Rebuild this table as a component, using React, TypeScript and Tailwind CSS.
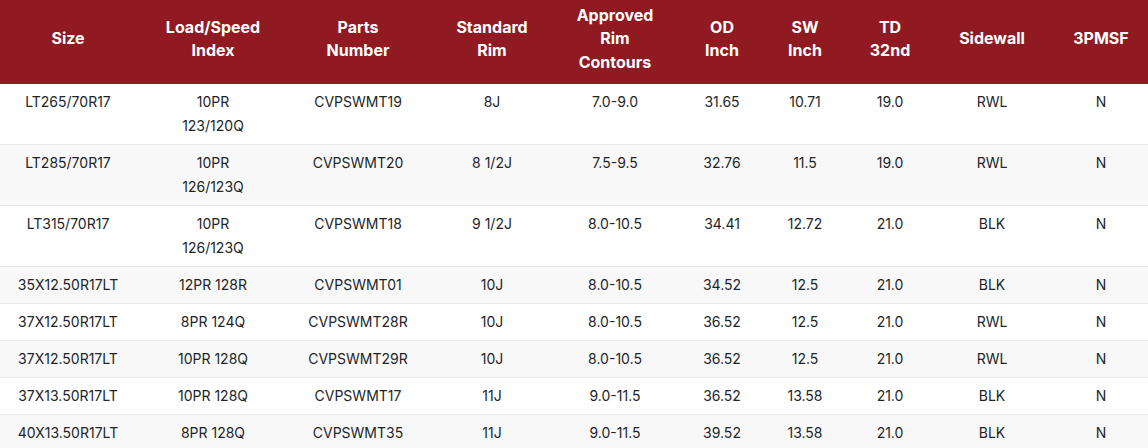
const HEAD = [
  ["Size"],
  ["Load/Speed", "Index"],
  ["Parts", "Number"],
  ["Standard", "Rim"],
  ["Approved", "Rim", "Contours"],
  ["OD", "Inch"],
  ["SW", "Inch"],
  ["TD", "32nd"],
  ["Sidewall"],
  ["3PMSF"],
];

const WIDTHS = ["w-[136px]", "w-[154px]", "w-[136px]", "w-[132px]", "w-[114px]", "w-[100px]", "w-[66px]", "w-[104px]", "w-[100px]", "w-[106px]"];

type Row = string[][];

const ROWS: Row[] = [
  [["LT265/70R17"], ["10PR", "123/120Q"], ["CVPSWMT19"], ["8J"], ["7.0-9.0"], ["31.65"], ["10.71"], ["19.0"], ["RWL"], ["N"]],
  [["LT285/70R17"], ["10PR", "126/123Q"], ["CVPSWMT20"], ["8 1/2J"], ["7.5-9.5"], ["32.76"], ["11.5"], ["19.0"], ["RWL"], ["N"]],
  [["LT315/70R17"], ["10PR", "126/123Q"], ["CVPSWMT18"], ["9 1/2J"], ["8.0-10.5"], ["34.41"], ["12.72"], ["21.0"], ["BLK"], ["N"]],
  [["35X12.50R17LT"], ["12PR 128R"], ["CVPSWMT01"], ["10J"], ["8.0-10.5"], ["34.52"], ["12.5"], ["21.0"], ["BLK"], ["N"]],
  [["37X12.50R17LT"], ["8PR 124Q"], ["CVPSWMT28R"], ["10J"], ["8.0-10.5"], ["36.52"], ["12.5"], ["21.0"], ["RWL"], ["N"]],
  [["37X12.50R17LT"], ["10PR 128Q"], ["CVPSWMT29R"], ["10J"], ["8.0-10.5"], ["36.52"], ["12.5"], ["21.0"], ["RWL"], ["N"]],
  [["37X13.50R17LT"], ["10PR 128Q"], ["CVPSWMT17"], ["11J"], ["9.0-11.5"], ["36.52"], ["13.58"], ["21.0"], ["BLK"], ["N"]],
  [["40X13.50R17LT"], ["8PR 128Q"], ["CVPSWMT35"], ["11J"], ["9.0-11.5"], ["39.52"], ["13.58"], ["21.0"], ["BLK"], ["N"]],
];

export default function App() {
  return (
    <div className="w-[1148px] h-[448px] overflow-hidden bg-white font-['Inter','Liberation_Sans',sans-serif]">
      <table className="w-full table-fixed border-collapse text-center">
        <colgroup>
          {WIDTHS.map((w, i) => (
            <col key={i} className={w} />
          ))}
        </colgroup>
        <thead>
          <tr className="h-[84px] bg-[#901a21]">
            {HEAD.map((lines, i) => (
              <th
                key={i}
                className={`${i === 9 ? 'pl-[14px] pr-[2px]' : 'px-1'} pb-[6px] text-[16px] leading-[23.5px] font-bold text-white align-middle`}
              >
                {lines.map((l, j) => (
                  <div key={j}>{l}</div>
                ))}
              </th>
            ))}
          </tr>
        </thead>
        <tbody>
          {ROWS.map((row, r) => (
            <tr key={r} className={`border-b border-[#e8e8e8] ${r % 2 === 1 ? 'bg-[#f8f8f8]' : 'bg-white'}`}>
              {row.map((cell, c) => (
                <td
                  key={c}
                  className={`${c === 9 ? 'pl-[14px] pr-[2px]' : 'px-1'} py-[6px] text-[14px] leading-[24px] text-[#212529] align-top`}
                >
                  {cell.map((l, j) => (
                    <div key={j}>{l}</div>
                  ))}
                </td>
              ))}
            </tr>
          ))}
        </tbody>
      </table>
    </div>
  );
}
